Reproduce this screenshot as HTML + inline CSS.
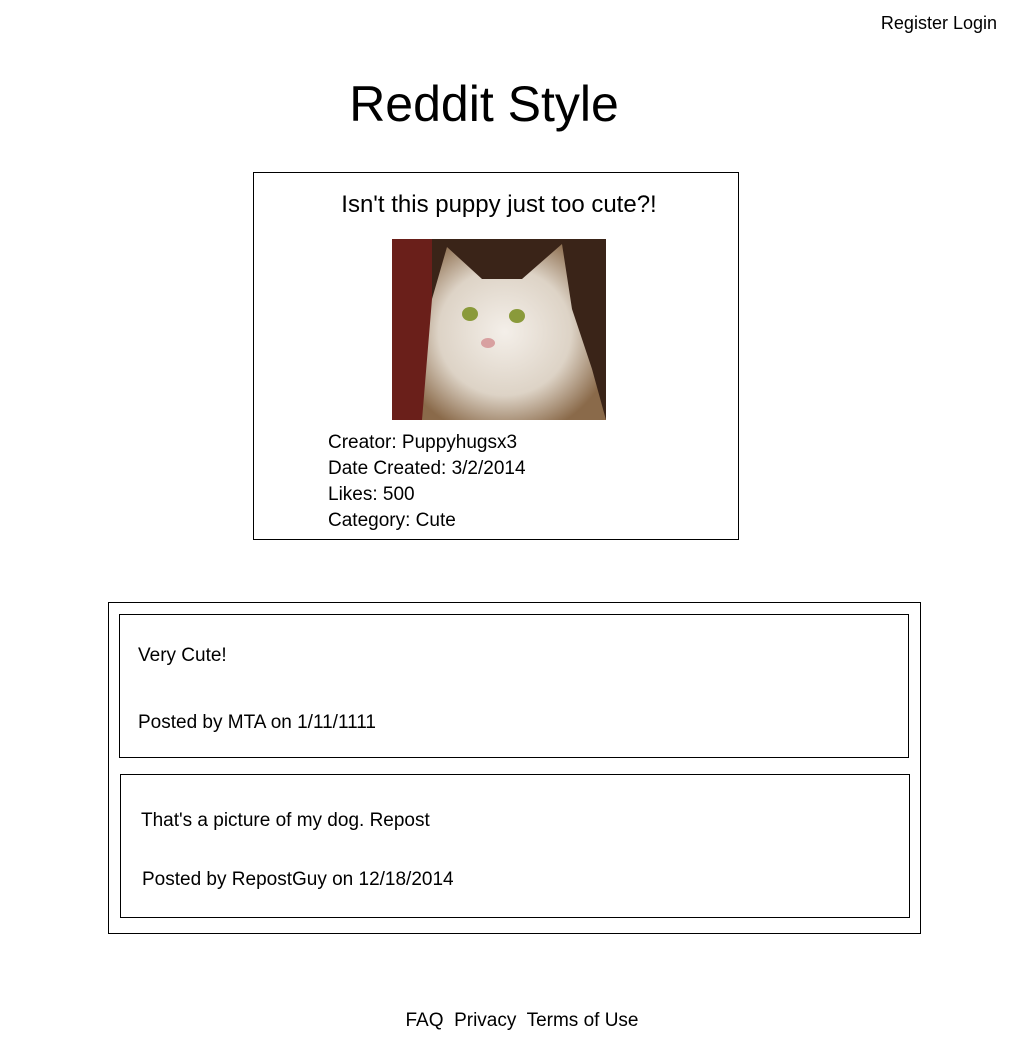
<!DOCTYPE html>
<html><head><style>
body{margin:0;width:1024px;height:1055px;background:#fff;font-family:"Liberation Sans",Arial,sans-serif;color:#000;position:relative;overflow:hidden}
.a{position:absolute;white-space:nowrap}
.box{position:absolute;border:1px solid #000;box-sizing:border-box}
</style></head><body>
<div class="a" style="right:27px;top:13px;font-size:18px">Register Login</div>
<div class="a" style="left:0;width:968px;text-align:center;top:75px;font-size:50px">Reddit Style</div>
<div class="box" style="left:253px;top:172px;width:486px;height:368px">
<div class="a" style="left:0;width:490px;text-align:center;top:18px;font-size:24px">Isn't this puppy just too cute?!</div>
<svg class="a" style="left:138px;top:66px" width="214" height="181" viewBox="0 0 214 181">
<defs><radialGradient id="g" cx="0.45" cy="0.5" r="0.6"><stop offset="0" stop-color="#f4efe9"/><stop offset="0.6" stop-color="#ddd3c6"/><stop offset="1" stop-color="#8a6a4a"/></radialGradient></defs>
<rect width="214" height="181" fill="#3a2418"/>
<rect x="0" y="0" width="40" height="181" fill="#6a1f1a"/>
<path d="M30 181 L40 60 L55 8 L90 40 L130 40 L170 5 L180 70 L200 130 L214 181Z" fill="url(#g)"/>
<ellipse cx="78" cy="75" rx="8" ry="7" fill="#8a9a3a"/><ellipse cx="125" cy="77" rx="8" ry="7" fill="#8a9a3a"/>
<ellipse cx="96" cy="104" rx="7" ry="5" fill="#d8a0a0"/>
</svg>
<div class="a" style="left:74px;top:257px;font-size:19px;line-height:26px">Creator: Puppyhugsx3<br>Date Created: 3/2/2014<br>Likes: 500<br>Category: Cute</div>
</div>
<div class="box" style="left:108px;top:602px;width:813px;height:332px"></div>
<div class="box" style="left:119px;top:614px;width:790px;height:144px">
<div class="a" style="left:18px;top:30px;font-size:19px">Very Cute!</div>
<div class="a" style="left:18px;top:97px;font-size:19px">Posted by MTA on 1/11/1111</div>
</div>
<div class="box" style="left:120px;top:774px;width:790px;height:144px">
<div class="a" style="left:20px;top:35px;font-size:19px">That's a picture of my dog. Repost</div>
<div class="a" style="left:21px;top:94px;font-size:19px">Posted by RepostGuy on 12/18/2014</div>
</div>
<div class="a" style="left:0;width:1044px;text-align:center;top:1010px;font-size:19px">FAQ&nbsp; Privacy&nbsp; Terms of Use</div>
</body></html>
